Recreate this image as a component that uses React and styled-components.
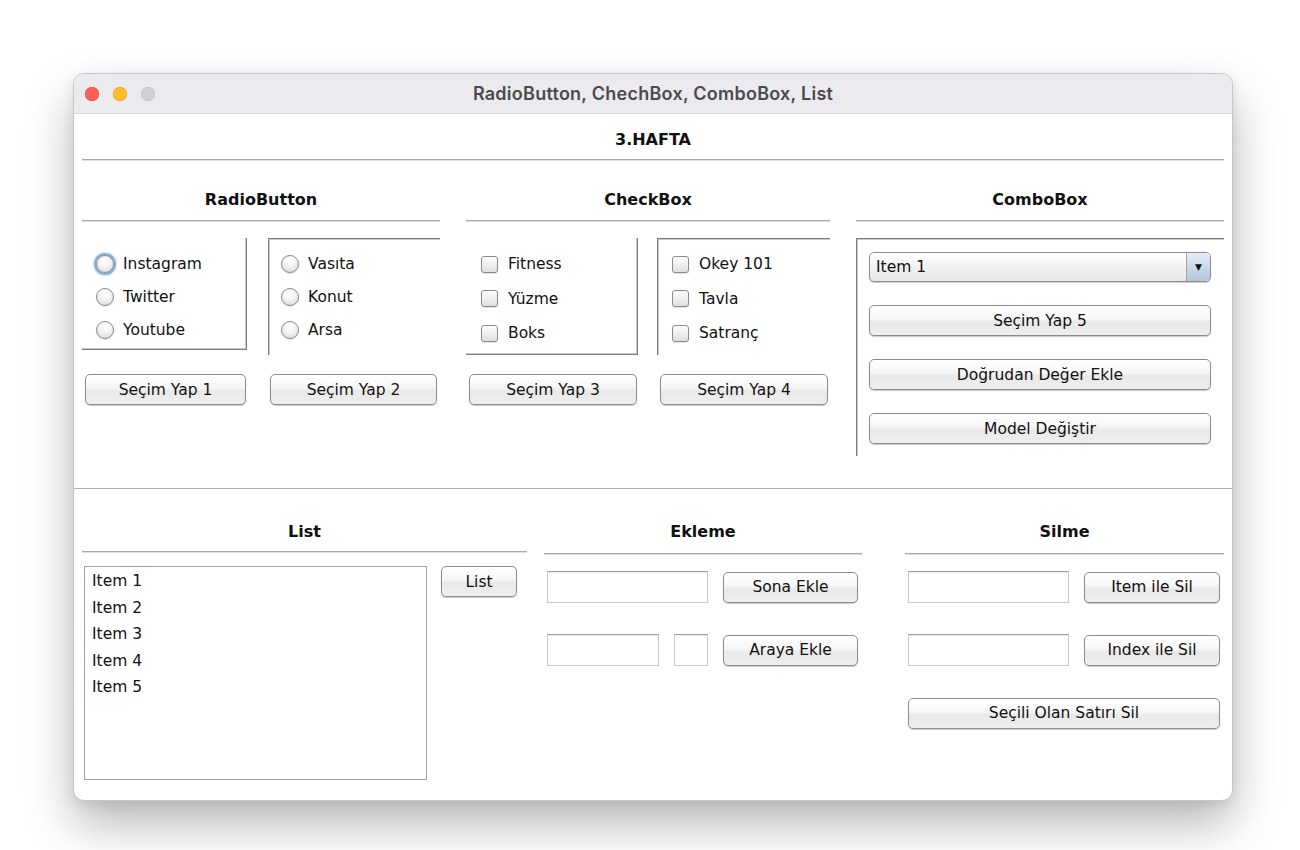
import React from "react";
import styled, { createGlobalStyle, css } from "styled-components";

const GlobalStyle = createGlobalStyle`
  html, body { margin: 0; padding: 0; background: #ffffff; }
  body { font-family: "DejaVu Sans", "Liberation Sans", sans-serif; color: #111; }
  * { box-sizing: border-box; }
`;

const Page = styled.div`
  width: 1300px;
  height: 850px;
  padding: 73px 0 0 73px;
  overflow: hidden;
`;

const Window = styled.div`
  width: 1160px;
  height: 728px;
  background: #fff;
  border: 1px solid #c6c6c8;
  border-radius: 11px;
  overflow: hidden;
  box-shadow: 0 24px 48px rgba(0, 0, 0, 0.28), 0 4px 12px rgba(0, 0, 0, 0.08);
  display: flex;
  flex-direction: column;
`;

const TitleBar = styled.div`
  height: 40px;
  flex: none;
  background: #ebeaee;
  border-bottom: 1px solid #d7d6da;
  display: grid;
  grid-template-columns: 1fr auto 1fr;
  align-items: center;
`;

const Lights = styled.div`
  display: flex;
  gap: 14px;
  padding-left: 11px;
`;

const Light = styled.span`
  width: 14px;
  height: 14px;
  border-radius: 50%;
  background: ${(p) => p.$color};
  box-shadow: inset 0 0 0 0.5px ${(p) => p.$edge};
`;

const WindowTitle = styled.div`
  font-family: Inter, "Open Sans", sans-serif;
  font-weight: 600;
  font-size: 18px;
  color: #4b4b4d;
  letter-spacing: 0.25px;
`;

const Content = styled.div`
  padding: 0 8px;
  flex: 1;
`;

const Header = styled.div`
  text-align: center;
  font-weight: bold;
  font-size: 16px;
  line-height: 22px;
  padding: 15px 0 8px;
`;

const Rule = styled.div`
  height: 2px;
  border-top: 1px solid #a7a8b2;
  border-bottom: 1px solid #dfe0e4;
`;

const TopGrid = styled.div`
  display: grid;
  grid-template-columns: 358px 364px 1fr;
  column-gap: 26px;
  align-items: start;
`;

const Column = styled.div`
  display: flex;
  flex-direction: column;
  padding-left: ${(p) => p.$indent || 0}px;
`;

const SectionTitle = styled.div`
  text-align: center;
  font-weight: bold;
  font-size: 16px;
  line-height: 22px;
  padding: ${(p) => p.$top}px 0 ${(p) => p.$bottom}px;
`;

const SubGrid = styled.div`
  margin-top: 16px;
  display: grid;
  grid-template-columns: ${(p) => p.$cols};
  grid-template-rows: 117px auto;
  column-gap: ${(p) => p.$gap}px;
  row-gap: 19px;
`;

const Panel = styled.div`
  align-self: start;
  height: ${(p) => p.$h}px;
  display: flex;
  flex-direction: column;
  padding: ${(p) => (p.$edge === "br" ? 9 : 8)}px 0 0 ${(p) => p.$pl}px;
  ${(p) =>
    p.$edge === "br"
      ? css`
          border-right: 1px solid #7d7d7d;
          border-bottom: 1px solid #7d7d7d;
          box-shadow: inset -1px -1px 0 #c9c9c9;
        `
      : css`
          border-left: 1px solid #7d7d7d;
          border-top: 1px solid #7d7d7d;
          box-shadow: inset 1px 1px 0 #c9c9c9;
        `}
`;

const Option = styled.label`
  display: flex;
  align-items: center;
  gap: ${(p) => p.$gap}px;
  height: ${(p) => p.$h}px;
  font-size: 15.5px;
  color: #111;
`;

const Radio = styled.span`
  width: 18px;
  height: 18px;
  border-radius: 50%;
  border: 1px solid #8a8a8a;
  background: radial-gradient(circle at 50% 30%, #ffffff 0%, #f3f3f3 45%, #d6d6d6 100%);
  box-shadow: ${(p) =>
    p.$focus ? "0 0 0 2px #86aedb, 0 0 2px 3px rgba(120,160,210,0.35)" : "0 1px 1px rgba(0,0,0,0.12)"};
  flex: none;
`;

const Check = styled.span`
  width: 17px;
  height: 17px;
  border-radius: 3px;
  border: 1px solid #8a8a8a;
  background: linear-gradient(#fdfdfd, #ececec 60%, #dedede);
  box-shadow: 0 1px 1px rgba(0, 0, 0, 0.12);
  flex: none;
`;

const Button = styled.button`
  font-family: "DejaVu Sans", "Liberation Sans", sans-serif;
  font-size: 15.5px;
  color: #111;
  height: 31px;
  width: ${(p) => (p.$w ? `${p.$w}px` : "auto")};
  margin: ${(p) => p.$margin || "0"};
  padding: 0 8px;
  border: 1px solid #8c8c8c;
  border-radius: 5px;
  background: linear-gradient(#ffffff 0%, #f6f6f6 45%, #e9e9e9 55%, #eeeeee 100%);
  box-shadow: 0 1px 1px rgba(0, 0, 0, 0.22);
  display: flex;
  align-items: center;
  justify-content: center;
  flex: none;
  cursor: default;
`;

const ComboPanel = styled.div`
  margin-top: 16px;
  display: flex;
  flex-direction: column;
  gap: 23px;
  padding: 13px 13px 12px 12px;
  border-left: 1px solid #7d7d7d;
  border-top: 1px solid #7d7d7d;
  box-shadow: inset 1px 1px 0 #c9c9c9;
`;

const Combo = styled.div`
  height: 30px;
  display: flex;
  border: 1px solid #8c8c8c;
  border-radius: 5px;
  overflow: hidden;
  background: linear-gradient(#ffffff, #f1f1f1 50%, #e6e6e6);
  box-shadow: 0 1px 1px rgba(0, 0, 0, 0.2);
  font-size: 15.5px;
`;

const ComboText = styled.div`
  flex: 1;
  display: flex;
  align-items: center;
  padding-left: 6px;
`;

const ComboArrow = styled.div`
  width: 24px;
  border-left: 1px solid #98a4b3;
  background: linear-gradient(#e6eef8, #c9d8e9 50%, #b4c7dc);
  display: flex;
  align-items: center;
  justify-content: center;
  font-size: 9px;
  color: #111;
`;

const Divider = styled.div`
  margin: 32px -8px 0;
  height: 1px;
  background: #adadb5;
`;

const BottomGrid = styled.div`
  display: grid;
  grid-template-columns: 445px 318px 1fr;
  column-gap: 17px;
  align-items: start;
`;

const ListRow = styled.div`
  margin-top: 13px;
  padding-left: 2px;
  display: flex;
  gap: 14px;
  align-items: flex-start;
`;

const ListBox = styled.div`
  width: 343px;
  height: 214px;
  border: 1px solid #a2a2a6;
  background: #fff;
  padding-top: 1px;
`;

const ListItem = styled.div`
  height: 26.5px;
  line-height: 26.5px;
  padding-left: 7px;
  font-size: 15.5px;
`;

const Form = styled.div`
  margin-top: 16px;
  display: flex;
  flex-direction: column;
  gap: 31px;
  padding-left: 3px;
`;

const FormRow = styled.div`
  display: flex;
  align-items: center;
  gap: 15px;
  height: 32px;
`;

const Field = styled.input`
  width: ${(p) => p.$w}px;
  height: 32px;
  border: 1px solid #c9c9c9;
  border-top-color: #9e9e9e;
  box-shadow: inset 0 1px 0 #ececec;
  background: #fff;
  padding: 0 4px;
  font-size: 15px;
  outline: none;
  flex: none;
`;

const radioLeft = ["Instagram", "Twitter", "Youtube"];
const radioRight = ["Vasıta", "Konut", "Arsa"];
const checkLeft = ["Fitness", "Yüzme", "Boks"];
const checkRight = ["Okey 101", "Tavla", "Satranç"];

export default function App() {
  return (
    <Page>
      <GlobalStyle />
      <Window>
        <TitleBar>
          <Lights>
            <Light $color="#fe5f57" $edge="#e0443e" />
            <Light $color="#febc2e" $edge="#dea123" />
            <Light $color="#d1d0d4" $edge="#bdbcc0" />
          </Lights>
          <WindowTitle>RadioButton, ChechBox, ComboBox, List</WindowTitle>
          <div />
        </TitleBar>
        <Content>
          <Header>3.HAFTA</Header>
          <Rule />
          <TopGrid>
            <Column>
              <SectionTitle $top={28} $bottom={9}>RadioButton</SectionTitle>
              <Rule />
              <SubGrid $cols="165px 1fr" $gap={21}>
                <Panel $edge="br" $h={112} $pl={14}>
                  {radioLeft.map((t, i) => (
                    <Option key={t} $h={33} $gap={9}>
                      <Radio $focus={i === 0} />
                      {t}
                    </Option>
                  ))}
                </Panel>
                <Panel $edge="tl" $h={117} $pl={12}>
                  {radioRight.map((t) => (
                    <Option key={t} $h={33} $gap={9}>
                      <Radio />
                      {t}
                    </Option>
                  ))}
                </Panel>
                <Button $margin="0 1px 0 3px">Seçim Yap 1</Button>
                <Button $margin="0 3px 0 2px">Seçim Yap 2</Button>
              </SubGrid>
            </Column>
            <Column>
              <SectionTitle $top={28} $bottom={9}>CheckBox</SectionTitle>
              <Rule />
              <SubGrid $cols="172px 1fr" $gap={19}>
                <Panel $edge="br" $h={117} $pl={15}>
                  {checkLeft.map((t) => (
                    <Option key={t} $h={34.5} $gap={10}>
                      <Check />
                      {t}
                    </Option>
                  ))}
                </Panel>
                <Panel $edge="tl" $h={117} $pl={14}>
                  {checkRight.map((t) => (
                    <Option key={t} $h={34.5} $gap={10}>
                      <Check />
                      {t}
                    </Option>
                  ))}
                </Panel>
                <Button $margin="0 1px 0 3px">Seçim Yap 3</Button>
                <Button $margin="0 2px 0 3px">Seçim Yap 4</Button>
              </SubGrid>
            </Column>
            <Column>
              <SectionTitle $top={28} $bottom={9}>ComboBox</SectionTitle>
              <Rule />
              <ComboPanel>
                <Combo>
                  <ComboText>Item 1</ComboText>
                  <ComboArrow>▼</ComboArrow>
                </Combo>
                <Button>Seçim Yap 5</Button>
                <Button>Doğrudan Değer Ekle</Button>
                <Button>Model Değiştir</Button>
              </ComboPanel>
            </Column>
          </TopGrid>
          <Divider />
          <BottomGrid>
            <Column>
              <SectionTitle $top={32} $bottom={8}>List</SectionTitle>
              <Rule />
              <ListRow>
                <ListBox>
                  {["Item 1", "Item 2", "Item 3", "Item 4", "Item 5"].map((t) => (
                    <ListItem key={t}>{t}</ListItem>
                  ))}
                </ListBox>
                <Button $w={76}>List</Button>
              </ListRow>
            </Column>
            <Column>
              <SectionTitle $top={32} $bottom={10}>Ekleme</SectionTitle>
              <Rule />
              <Form>
                <FormRow>
                  <Field $w={161} />
                  <Button $w={135}>Sona Ekle</Button>
                </FormRow>
                <FormRow>
                  <Field $w={112} />
                  <Field $w={34} />
                  <Button $w={135}>Araya Ekle</Button>
                </FormRow>
              </Form>
            </Column>
            <Column $indent={26}>
              <SectionTitle $top={32} $bottom={10}>Silme</SectionTitle>
              <Rule />
              <Form>
                <FormRow>
                  <Field $w={161} />
                  <Button $w={136}>Item ile Sil</Button>
                </FormRow>
                <FormRow>
                  <Field $w={161} />
                  <Button $w={136}>Index ile Sil</Button>
                </FormRow>
                <FormRow>
                  <Button $w={312}>Seçili Olan Satırı Sil</Button>
                </FormRow>
              </Form>
            </Column>
          </BottomGrid>
        </Content>
      </Window>
    </Page>
  );
}
